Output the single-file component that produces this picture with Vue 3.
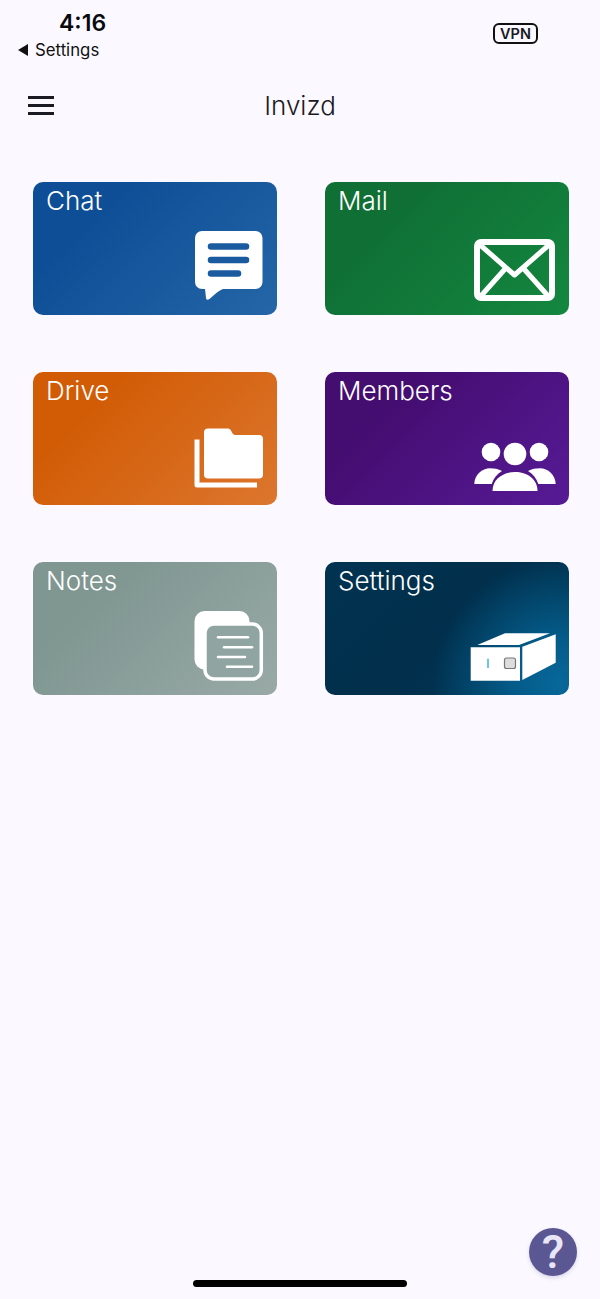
<template>
  <div class="page">
    <div class="status">
      <div class="status-left">
        <div class="time">4:16</div>
        <div class="back"><span class="back-arrow"></span>Settings</div>
      </div>
      <div class="vpn">VPN</div>
    </div>

    <header class="topbar">
      <div class="burger"><span></span><span></span><span></span></div>
      <h1>Invizd</h1>
    </header>

    <div class="grid">
      <div class="card chat">
        <div class="label">Chat</div>
        <svg class="icon" viewBox="0 0 90 72">
          <path fill="#fff" d="M29 2H82.500A7 7 0 0 1 89.500 9V53A7 7 0 0 1 82.500 60H50C44 62 40 68 35.500 70.500C34 71 33 70.500 33 69L32 60H29A7 7 0 0 1 22 53V9A7 7 0 0 1 29 2Z" />
          <g stroke="#1a5a9f" stroke-width="6.500" stroke-linecap="round">
            <path d="M38 17.500H73" />
            <path d="M38 31H73" />
            <path d="M38 44.500H65" />
          </g>
        </svg>
      </div>

      <div class="card mail">
        <div class="label">Mail</div>
        <svg class="icon" viewBox="0 0 90 72" fill="none" stroke="#fff">
          <rect x="12" y="13" width="75" height="56" rx="4" stroke-width="6" />
          <path stroke-width="5" stroke-linejoin="round" d="M14 15L49.500 46L85 15" />
          <path stroke-width="5" d="M15 68L40 40" />
          <path stroke-width="5" d="M84 68L59 40" />
        </svg>
      </div>

      <div class="card drive">
        <div class="label">Drive</div>
        <svg class="icon" viewBox="0 0 90 72" fill="#fff">
          <path d="M35 9.500H54C56 9.500 57 10 58 11.500C59 13.500 60 16 62 16H86A4 4 0 0 1 90 20V55.500A4 4 0 0 1 86 59.500H35A4 4 0 0 1 31 55.500V13.500A4 4 0 0 1 35 9.500Z" />
          <path d="M21.500 20.500H26.500V63.500H84V68.500H24A2.500 2.500 0 0 1 21.500 66Z" />
        </svg>
      </div>

      <div class="card members">
        <div class="label">Members</div>
        <svg class="icon" viewBox="0 0 90 72" fill="#fff">
          <circle cx="26" cy="33" r="9.300" />
          <circle cx="50" cy="35" r="11.300" />
          <circle cx="74" cy="33" r="9.300" />
          <path d="M27.500 72C27.500 60 38 53 50 53C62 53 72.500 60 72.500 72Z" />
          <path d="M9.300 65C9.500 56 17 49.300 25 49.300C29 49.300 33.500 50 37 52C32 55 28.500 59.500 26.700 65Z" />
          <path d="M90.700 65C90.500 56 83 49.300 75 49.300C71 49.300 66.500 50 63 52C68 55 71.500 59.500 73.300 65Z" />
        </svg>
      </div>

      <div class="card notes">
        <div class="label">Notes</div>
        <svg class="icon" viewBox="0 0 90 72">
          <rect x="21.500" y="2" width="55" height="58.500" rx="10" fill="#fff" />
          <rect x="32" y="15" width="56.300" height="55" rx="9" fill="#90a5a2" stroke="#fff" stroke-width="3.500" />
          <g stroke="#fff" stroke-width="2.500" stroke-linecap="round">
            <path d="M45 28.300H75" />
            <path d="M51 38.300H79" />
            <path d="M45 48H72" />
            <path d="M54 57.700H79" />
          </g>
        </svg>
      </div>

      <div class="card settings">
        <div class="label">Settings</div>
        <svg class="icon" viewBox="0 0 90 72">
          <path fill="#fff" d="M5.700 38.300H55V71.700H5.700Z" />
          <path fill="#fff" d="M57.300 37.700L90.700 25.300V53.700L57.300 71Z" />
          <path fill="#fff" d="M12.300 36L40 24.300H85L54 36Z" />
          <path stroke="#3db2e0" stroke-width="1.500" d="M23 49.700V59" />
          <rect x="39.500" y="49" width="11" height="10.500" rx="2" fill="#ddd" stroke="#777" stroke-width="1.200" />
        </svg>
      </div>
    </div>

    <div class="home"></div>
    <button class="help">?</button>
  </div>
</template>

<script setup>
</script>

<style>
html, body {
  background: #fbf9ff;
}
</style>

<style scoped>
.page {
  position: relative;
  display: flex;
  flex-direction: column;
  height: 1299px;
  overflow: hidden;
  background: #fbf9ff;
  color: #1a1a22;
  font-family: Inter, "Liberation Sans", Arial, sans-serif;
}

.status {
  display: flex;
  justify-content: space-between;
  height: 70px;
  padding: 0 62px 0 18px;
  box-sizing: border-box;
}

.time {
  margin: 9px 0 0 41px;
  font-size: 23px;
  font-weight: 600;
  line-height: 28px;
  color: #0a0a0e;
}

.back {
  display: flex;
  align-items: center;
  gap: 7px;
  margin-top: 2px;
  font-size: 16.800px;
  line-height: 22px;
  color: #111;
}

.back-arrow {
  width: 0;
  height: 0;
  border-top: 6px solid transparent;
  border-bottom: 6px solid transparent;
  border-right: 10px solid #111;
}

.vpn {
  align-self: flex-start;
  margin-top: 23px;
  width: 45px;
  height: 21px;
  box-sizing: border-box;
  border: 2px solid #111;
  border-radius: 6px;
  font-size: 14.500px;
  font-weight: 600;
  line-height: 17px;
  text-align: center;
}

.topbar {
  position: relative;
  height: 72px;
  display: flex;
  align-items: center;
  justify-content: center;
}

.topbar h1 {
  margin: 0;
  font-size: 26px;
  font-weight: 300;
  line-height: 72px;
}

.burger {
  position: absolute;
  left: 28px;
  top: 26px;
  display: flex;
  flex-direction: column;
  gap: 5px;
  width: 26px;
}

.burger span {
  display: block;
  height: 3px;
  background: #1a1a22;
}

.grid {
  display: grid;
  grid-template-columns: 244px 244px;
  grid-auto-rows: 133px;
  column-gap: 48px;
  row-gap: 57px;
  margin: 40px 0 0 33px;
}

.card {
  display: flex;
  flex-direction: column;
  padding: 2px 14px 14px 13px;
  box-sizing: border-box;
  border-radius: 10px;
  color: #fff;
}

.label {
  font-size: 26px;
  font-weight: 300;
  line-height: 34px;
}

.icon {
  align-self: flex-end;
  margin-top: auto;
  width: 90px;
  height: 72px;
  overflow: visible;
}

.chat {
  background: linear-gradient(135deg, #0d4e96 25%, #2566a8 100%);
}

.mail {
  background: linear-gradient(135deg, #0f6f35 25%, #14873f 100%);
}

.drive {
  background: linear-gradient(135deg, #d25c06 25%, #dc762e 100%);
}

.members {
  background: linear-gradient(135deg, #440d70 25%, #571a96 100%);
}

.notes {
  background: linear-gradient(135deg, #7f9691 25%, #99aaa6 100%);
}

.settings {
  background:
    radial-gradient(circle at 96% 92%, #076899 0, #045a88 18%, rgba(2, 64, 100, 0) 48%),
    linear-gradient(135deg, #01324f 10%, #012f4c 50%, #013a59 100%);
}

.home {
  width: 214px;
  height: 7px;
  margin: auto auto 12px;
  border-radius: 4px;
  background: #000;
}

.help {
  position: absolute;
  left: 529px;
  top: 1228px;
  width: 48px;
  height: 48px;
  padding: 0;
  border: 0;
  border-radius: 50%;
  background: #5a5793;
  color: #eae6f8;
  font-family: Roboto, sans-serif;
  font-size: 46px;
  font-weight: 500;
  line-height: 48px;
  box-shadow: 0 2px 4px rgba(90, 87, 147, 0.2);
}
</style>
